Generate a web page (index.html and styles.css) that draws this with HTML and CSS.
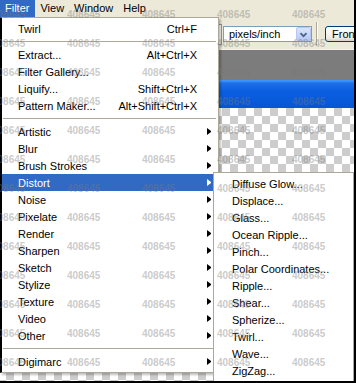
FILE: index.html
```html
<!DOCTYPE html>
<html lang="en">
<head>
    <meta charset="UTF-8">
    <title>Filter menu</title>
    <link rel="stylesheet" href="styles.css">
</head>
<body>
    <div class="screen">
        <div class="menubar">
            <span class="mb-item active">Filter</span>
            <span class="mb-item">View</span>
            <span class="mb-item">Window</span>
            <span class="mb-item">Help</span>
        </div>

        <div class="optbar">
            <div class="combo combo-back"></div>
            <div class="combo">
                <span class="combo-text">pixels/inch</span>
                <span class="combo-btn">
                    <svg width="15" height="13" viewBox="0 0 15 13"><path d="M4 5 L7.5 8.5 L11 5" fill="none" stroke="#4d6185" stroke-width="2"/></svg>
                </span>
            </div>
            <div class="opt-sep"></div>
            <div class="xp-btn">Front Image</div>
        </div>

        <div class="workspace"></div>
        <div class="titlebar"></div>
        <div class="canvas"></div>

        <ul class="menu main-menu">
            <li class="item"><span class="label">Twirl</span><span class="keys">Ctrl+F</span><span class="sub"></span></li>
            <li class="sep"></li>
            <li class="item"><span class="label">Extract...</span><span class="keys">Alt+Ctrl+X</span><span class="sub"></span></li>
            <li class="item"><span class="label">Filter Gallery...</span><span class="sub"></span></li>
            <li class="item"><span class="label">Liquify...</span><span class="keys">Shift+Ctrl+X</span><span class="sub"></span></li>
            <li class="item"><span class="label">Pattern Maker...</span><span class="keys">Alt+Shift+Ctrl+X</span><span class="sub"></span></li>
            <li class="sep"></li>
            <li class="item"><span class="label">Artistic</span><span class="sub arrow"></span></li>
            <li class="item"><span class="label">Blur</span><span class="sub arrow"></span></li>
            <li class="item"><span class="label">Brush Strokes</span><span class="sub arrow"></span></li>
            <li class="item hot"><span class="label">Distort</span><span class="sub arrow"></span></li>
            <li class="item"><span class="label">Noise</span><span class="sub arrow"></span></li>
            <li class="item"><span class="label">Pixelate</span><span class="sub arrow"></span></li>
            <li class="item"><span class="label">Render</span><span class="sub arrow"></span></li>
            <li class="item"><span class="label">Sharpen</span><span class="sub arrow"></span></li>
            <li class="item"><span class="label">Sketch</span><span class="sub arrow"></span></li>
            <li class="item"><span class="label">Stylize</span><span class="sub arrow"></span></li>
            <li class="item"><span class="label">Texture</span><span class="sub arrow"></span></li>
            <li class="item"><span class="label">Video</span><span class="sub arrow"></span></li>
            <li class="item"><span class="label">Other</span><span class="sub arrow"></span></li>
            <li class="sep"></li>
            <li class="item"><span class="label">Digimarc</span><span class="sub arrow"></span></li>
        </ul>

        <ul class="menu sub-menu">
            <li class="item"><span class="label">Diffuse Glow...</span></li>
            <li class="item"><span class="label">Displace...</span></li>
            <li class="item"><span class="label">Glass...</span></li>
            <li class="item"><span class="label">Ocean Ripple...</span></li>
            <li class="item"><span class="label">Pinch...</span></li>
            <li class="item"><span class="label">Polar Coordinates...</span></li>
            <li class="item"><span class="label">Ripple...</span></li>
            <li class="item"><span class="label">Shear...</span></li>
            <li class="item"><span class="label">Spherize...</span></li>
            <li class="item"><span class="label">Twirl...</span></li>
            <li class="item"><span class="label">Wave...</span></li>
            <li class="item"><span class="label">ZigZag...</span></li>
        </ul>

        <!-- stock photo watermark laid over everything -->
        <div class="watermark">
            <div class="wm-row"><span>408645</span><span>408645</span><span>408645</span><span>408645</span><span>408645</span></div>
            <div class="wm-row"><span>408645</span><span>408645</span><span>408645</span><span>408645</span><span>408645</span></div>
            <div class="wm-row"><span>408645</span><span>408645</span><span>408645</span><span>408645</span><span>408645</span></div>
            <div class="wm-row"><span>408645</span><span>408645</span><span>408645</span><span>408645</span><span>408645</span></div>
            <div class="wm-row"><span>408645</span><span>408645</span><span>408645</span><span>408645</span><span>408645</span></div>
            <div class="wm-row"><span>408645</span><span>408645</span><span>408645</span><span>408645</span><span>408645</span></div>
            <div class="wm-row"><span>408645</span><span>408645</span><span>408645</span><span>408645</span><span>408645</span></div>
            <div class="wm-row"><span>408645</span><span>408645</span><span>408645</span><span>408645</span><span>408645</span></div>
            <div class="wm-row"><span>408645</span><span>408645</span><span>408645</span><span>408645</span><span>408645</span></div>
            <div class="wm-row"><span>408645</span><span>408645</span><span>408645</span><span>408645</span><span>408645</span></div>
            <div class="wm-row"><span>408645</span><span>408645</span><span>408645</span><span>408645</span><span>408645</span></div>
            <div class="wm-row"><span>408645</span><span>408645</span><span>408645</span><span>408645</span><span>408645</span></div>
            <div class="wm-row"><span>408645</span><span>408645</span><span>408645</span><span>408645</span><span>408645</span></div>
        </div>
    </div>
</body>
</html>
```

FILE: styles.css
```css
* {
    box-sizing: border-box;
}
body {
    margin: 0;
    font-family: "Liberation Sans", Arial, sans-serif;
    font-size: 11px;
    color: #000;
}
.screen {
    position: relative;
    width: 356px;
    height: 383px;
    overflow: hidden;
    display: flex;
    flex-direction: column;
    background: #ece9d8;
    border-right: 2px solid #000;
    border-bottom: 2px solid #000;
}

/* top menu bar */
.menubar {
    height: 17px;
    display: flex;
    flex: none;
}
.mb-item {
    padding: 0 5px;
    line-height: 17px;
}
.mb-item:first-child {
    padding-right: 6px;
}
.mb-item.active {
    background: #316ac5;
    color: #fff;
}

/* options bar */
.optbar {
    height: 33px;
    flex: none;
    display: flex;
    align-items: center;
    padding-top: 2px;
    border-bottom: 1px solid #f4f3ee;
}
.optbar > * {
    flex: none;
}
.combo {
    height: 16px;
    width: 89px;
    margin-left: 1px;
    background: #fff;
    border: 1px solid #7f9db9;
    display: flex;
    align-items: center;
    justify-content: space-between;
}
.combo-back {
    width: 72px;
    margin-left: 150px;
    height: 21px;
}
.combo-text {
    padding-left: 5px;
}
.combo-btn {
    width: 15px;
    height: 14px;
    background: linear-gradient(#dbe6fd, #b5c9f5);
    border: 1px solid #b7c8f0;
    border-radius: 2px;
    display: flex;
}
.opt-sep {
    width: 2px;
    height: 24px;
    margin-left: 4px;
    border-left: 1px solid #aca899;
    border-right: 1px solid #fff;
}
.xp-btn {
    margin-left: 7px;
    height: 16px;
    padding: 0 6px;
    white-space: nowrap;
    line-height: 14px;
    border: 1px solid #003c74;
    border-radius: 3px;
    background: linear-gradient(#fff, #ecebe6 80%, #d6d0c5);
}

.workspace {
    height: 30px;
    flex: none;
    background: #7c7c7c;
}
.titlebar {
    height: 28px;
    flex: none;
    background: linear-gradient(#3d95ff 0, #3d95ff 1px, #1f6fe8 3px, #0a5fe0 40%, #0656d6);
}
.canvas {
    flex: 1;
    background: conic-gradient(#cdcdcd 25%, #fff 0 50%, #cdcdcd 0 75%, #fff 0) 6px 0 / 16px 16px;
}

/* dropdown menus */
.menu {
    position: absolute;
    margin: 0;
    list-style: none;
    background: #fff;
    border: 1px solid #aca899;
    padding: 2px 1px 2px 0;
}
.main-menu {
    left: 0;
    top: 17px;
    width: 219px;
    border-left: 2px solid #000;
    box-shadow: 2px 2px 2px rgba(0, 0, 0, 0.25);
}
.sub-menu {
    left: 213px;
    top: 172px;
    width: 141px;
}
.item {
    height: 17px;
    display: flex;
    align-items: center;
    padding: 0 6px 0 16px;
    white-space: nowrap;
}
.sub-menu .item {
    padding-left: 18px;
}
.item .label {
    flex: 1;
}
.item .keys {
    text-align: right;
}
.item .sub {
    width: 14px;
    height: 7px;
    flex: none;
    display: flex;
    justify-content: flex-end;
}
.item .arrow::after {
    content: "";
    border-left: 4px solid #000;
    border-top: 3.5px solid transparent;
    border-bottom: 3.5px solid transparent;
}
.item.hot {
    background: #316ac5;
    color: #fff;
}
.item.hot .arrow::after {
    border-left-color: #fff;
}
.sep {
    height: 9px;
    padding: 4px 1px;
}
.sep::after {
    content: "";
    display: block;
    height: 1px;
    background: #aca899;
}

/* watermark */
.watermark {
    position: absolute;
    left: -8px;
    top: 9px;
    pointer-events: none;
    font-size: 10px;
    font-weight: bold;
    color: rgba(120, 120, 120, 0.4);
}
.wm-row {
    height: 29px;
    display: flex;
}
.wm-row span {
    width: 75px;
    flex: none;
    line-height: 12px;
}
```
